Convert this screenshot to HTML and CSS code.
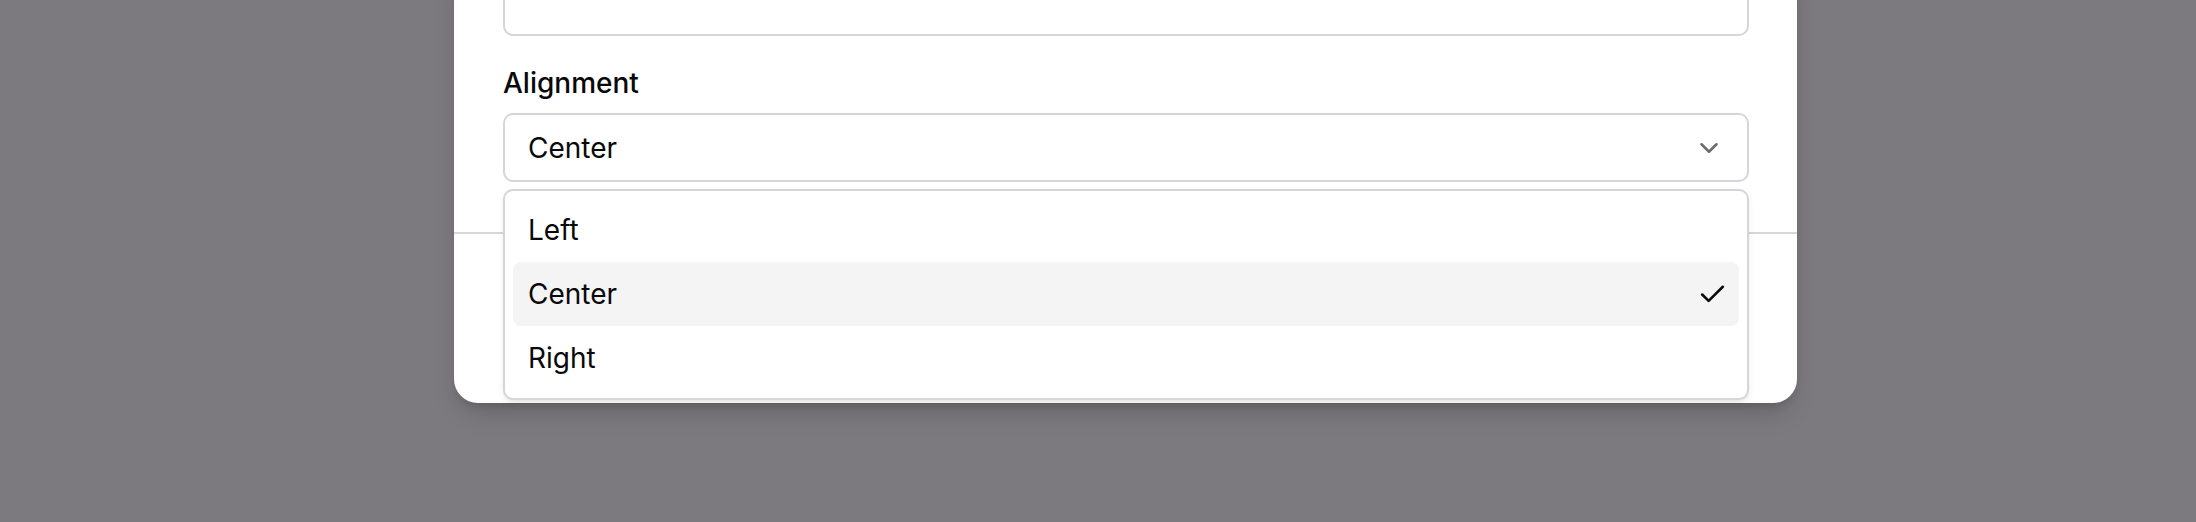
FILE: index.html
```html
<!DOCTYPE html>
<html lang="en">
<head>
<meta charset="utf-8">
<title>Alignment select</title>
<link rel="stylesheet" href="styles.css">
</head>
<body>
<div class="overlay">
  <div class="dialog">
    <div class="body">
      <div class="field-box"></div>
      <label class="label">Alignment</label>
      <div class="select-wrap">
        <button class="select" type="button">
          <span class="value">Center</span>
          <svg class="chevron" viewBox="0 0 24 24" fill="none" stroke="currentColor" stroke-width="2" stroke-linecap="round" stroke-linejoin="round"><path d="m6 9 6 6 6-6"/></svg>
        </button>
        <div class="menu" role="listbox">
          <div class="item">Left</div>
          <div class="item active">Center
            <svg class="check" viewBox="0 0 24 24" fill="none" stroke="currentColor" stroke-width="2" stroke-linecap="round" stroke-linejoin="round"><path d="M20 6 9 17l-5-5"/></svg>
          </div>
          <div class="item">Right</div>
        </div>
      </div>
    </div>
    <div class="footer"></div>
  </div>
</div>
</body>
</html>
```

FILE: styles.css
```css
* { box-sizing: border-box; }
html, body {
  margin: 0;
  height: 100%;
  overflow: hidden;
}
body {
  background: #7c7a7e;
  font-family: Inter, "Noto Sans", sans-serif;
  color: #09090b;
}
.overlay {
  width: 2196px;
  height: 522px;
}
.dialog {
  margin-top: -35px;
  margin-left: 454px;
  width: 1343px;
  background: #ffffff;
  border-radius: 0 0 24px 24px;
  box-shadow: 0 14px 26px -6px rgba(0, 0, 0, 0.18), 0 6px 10px -4px rgba(0, 0, 0, 0.12);
}
.body {
  padding: 0 48px 0 49px;
  display: flex;
  flex-direction: column;
}
.field-box {
  height: 71px;
  border: 2px solid #d6d5da;
  border-radius: 10px;
}
.label {
  margin-top: 30px;
  font-size: 28px;
  font-weight: 500;
  line-height: 35px;
}
.select-wrap {
  position: relative;
  margin-top: 12px;
}
.select {
  width: 100%;
  height: 69px;
  border: 2px solid #d6d5da;
  border-radius: 10px;
  background: #ffffff;
  padding: 0 23px 0 23px;
  display: flex;
  align-items: center;
  justify-content: space-between;
  font-family: inherit;
  font-size: 28px;
  color: #09090b;
}
.chevron {
  width: 30px;
  height: 30px;
  color: #6b6b70;
}
.menu {
  position: absolute;
  top: calc(100% + 7px);
  left: 0;
  right: 0;
  height: 211px;
  background: #ffffff;
  border: 2px solid #d6d5da;
  border-radius: 10px;
  padding: 7px 8px;
  box-shadow: 0 4px 8px -2px rgba(0, 0, 0, 0.1), 0 2px 4px -2px rgba(0, 0, 0, 0.06);
  z-index: 2;
}
.item {
  height: 64px;
  display: flex;
  align-items: center;
  justify-content: space-between;
  padding: 0 11px 0 15px;
  border-radius: 8px;
  font-size: 28px;
}
.item.active {
  background: #f4f4f5;
}
.check {
  width: 31px;
  height: 31px;
  color: #09090b;
}
.footer {
  margin-top: 50px;
  height: 171px;
  border-top: 2px solid #d6d5da;
  border-radius: 0 0 24px 24px;
}
```
